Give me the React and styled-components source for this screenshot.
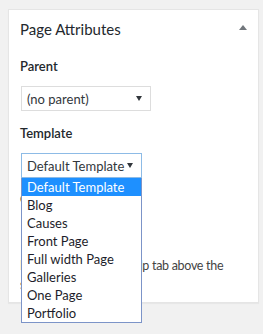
import * as React from 'react';
import styled, { createGlobalStyle } from 'styled-components';

const GlobalStyle = createGlobalStyle`
  body {
    margin: 0;
    background: #f1f1f1;
    font-family: "Segoe UI", Lato, "Noto Sans", sans-serif;
    color: #444;
  }
`;

const Page = styled.div`
  width: 263px;
  height: 334px;
  padding: 9px 4px 0 8px;
  box-sizing: border-box;
`;

const Postbox = styled.div`
  background: #fff;
  border: 1px solid #e5e5e5;
  box-shadow: 0 1px 1px rgba(0, 0, 0, 0.04);
  height: 294px;
  box-sizing: border-box;
`;

const Header = styled.div`
  display: flex;
  align-items: center;
  justify-content: space-between;
  padding: 9px 11px 0 11px;
`;

const Title = styled.h2`
  margin: 0;
  font-size: 15px;
  font-weight: 400;
  color: #23282d;
  line-height: 20px;
`;

const Toggle = styled.span`
  width: 0;
  height: 0;
  margin-bottom: 3px;
  border-left: 4px solid transparent;
  border-right: 4px solid transparent;
  border-bottom: 5px solid #72777c;
`;

const Inside = styled.div`
  padding: 0 11px;
`;

const Label = styled.p`
  margin: ${(p) => p.$top}px 0 0;
  font-size: 13px;
  font-weight: 600;
  color: #23282d;
  line-height: 18px;
`;

const SelectWrap = styled.div`
  position: relative;
  margin-top: ${(p) => p.$top}px;
  width: ${(p) => p.$width}px;
  margin-left: 1px;
`;

const SelectBox = styled.div`
  display: flex;
  align-items: center;
  justify-content: space-between;
  height: 25px;
  box-sizing: border-box;
  border: 1px solid ${(p) => (p.$focus ? '#8dbbe6' : '#ddd')};
  padding: 0 8px 0 5px;
  font-size: 13px;
  color: #32373c;
  background: #fff;
  white-space: nowrap;
`;

const Arrow = styled.span`
  width: 0;
  height: 0;
  border-left: 3.5px solid transparent;
  border-right: 3.5px solid transparent;
  border-top: 5px solid #32373c;
`;

const Menu = styled.ul`
  position: absolute;
  top: 100%;
  left: 0;
  width: 121px;
  margin: 0;
  padding: 0;
  list-style: none;
  background: #fff;
  border: 1px solid #7c94c8;
  border-top: none;
  box-sizing: border-box;
  z-index: 2;
`;

const Option = styled.li`
  height: 18px;
  line-height: 18px;
  padding: 0 5px;
  font-size: 13px;
  white-space: nowrap;
  color: ${(p) => (p.$active ? '#fff' : '#1d1d2a')};
  background: ${(p) => (p.$active ? '#1e90ff' : 'transparent')};
`;

const OrderInput = styled.div`
  margin: 8px 0 0 1px;
  width: 60px;
  height: 26px;
  border: 1px solid #ddd;
  box-sizing: border-box;
`;

const Help = styled.p`
  margin: 14px 0 0;
  font-size: 12.5px;
  letter-spacing: -0.3px;
  line-height: 19px;
  color: #444;
`;

const templates = [
  'Default Template',
  'Blog',
  'Causes',
  'Front Page',
  'Full width Page',
  'Galleries',
  'One Page',
  'Portfolio',
];

export default function App() {
  return (
    <Page>
      <GlobalStyle />
      <Postbox>
        <Header>
          <Title>Page Attributes</Title>
          <Toggle />
        </Header>
        <Inside>
          <Label $top={18}>Parent</Label>
          <SelectWrap $top={11} $width={130}>
            <SelectBox>
              <span>(no parent)</span>
              <Arrow />
            </SelectBox>
          </SelectWrap>
          <Label $top={13}>Template</Label>
          <SelectWrap $top={11} $width={121}>
            <SelectBox $focus>
              <span>Default Template</span>
              <Arrow />
            </SelectBox>
            <Menu>
              {templates.map((t, i) => (
                <Option key={t} $active={i === 0}>{t}</Option>
              ))}
            </Menu>
          </SelectWrap>
          <Label $top={12}>Order</Label>
          <OrderInput />
          <Help>Need help? Use the Help tab above the screen title.</Help>
        </Inside>
      </Postbox>
    </Page>
  );
}
